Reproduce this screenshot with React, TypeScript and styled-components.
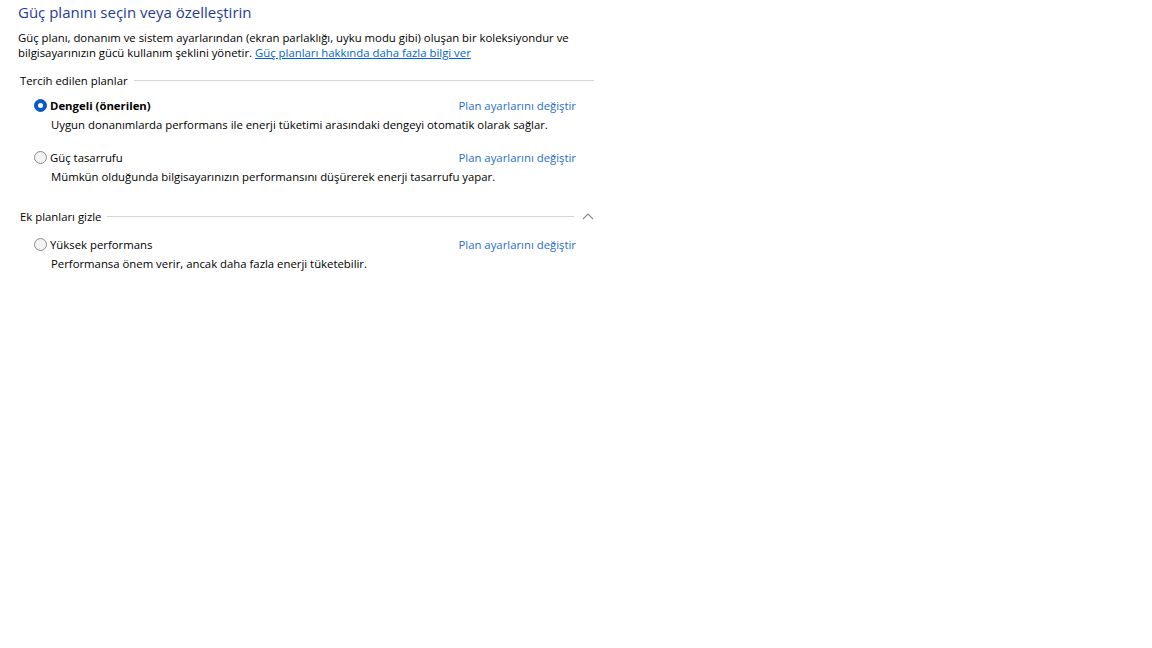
import React from "react";
import styled, { createGlobalStyle } from "styled-components";

const GlobalStyle = createGlobalStyle`
  html, body {
    margin: 0;
    padding: 0;
    background: #ffffff;
  }
  body {
    font-family: "Open Sans", "Noto Sans", sans-serif;
    font-size: 11.35px;
    color: #000000;
  }
`;

const Page = styled.div`
  width: 1152px;
  height: 648px;
  box-sizing: border-box;
  padding: 2px 0 0 18px;
  background: #ffffff;
`;

const Content = styled.div`
  width: 576px;
  display: flex;
  flex-direction: column;
`;

const Title = styled.h1`
  margin: 0;
  font-weight: 400;
  font-size: 15px;
  line-height: 21px;
  color: #1e3c96;
`;

const Intro = styled.div`
  margin-top: 7px;
  display: flex;
  flex-direction: column;
`;

const IntroLine = styled.div`
  height: 15px;
  line-height: 15px;
  white-space: nowrap;
`;

const Link = styled.a`
  color: #0066cc;
  text-decoration: underline;
  cursor: pointer;
`;

const GroupHeader = styled.div<{ $top: number }>`
  display: flex;
  align-items: center;
  gap: 6px;
  margin: ${(p) => p.$top}px 0 0 2px;
  height: 16px;
`;

const GroupLabel = styled.span`
  white-space: nowrap;
`;

const Rule = styled.div`
  flex: 1;
  height: 1px;
  background: #d4d4d4;
`;

const Chevron = styled.span`
  display: flex;
  width: 14px;
  justify-content: flex-end;
`;

const PlanList = styled.div<{ $top: number }>`
  display: flex;
  flex-direction: column;
  gap: 18px;
  margin: ${(p) => p.$top}px 0 0 16px;
  width: 542px;
`;

const Plan = styled.div`
  display: flex;
  flex-direction: column;
  gap: 4px;
`;

const PlanRow = styled.div`
  display: flex;
  align-items: center;
  justify-content: space-between;
  height: 15px;
`;

const PlanName = styled.label<{ $bold?: boolean }>`
  display: flex;
  align-items: center;
  gap: 3px;
  font-weight: ${(p) => (p.$bold ? 700 : 400)};
`;

const Radio = styled.span<{ $checked?: boolean }>`
  width: 13px;
  height: 13px;
  box-sizing: border-box;
  border-radius: 50%;
  border: 1px solid ${(p) => (p.$checked ? "#0a5cc4" : "#8c8c8c")};
  background: ${(p) => (p.$checked ? "#0a5cc4" : "#f3f3f3")};
  display: flex;
  align-items: center;
  justify-content: center;
  &::after {
    content: "";
    display: ${(p) => (p.$checked ? "block" : "none")};
    width: 5px;
    height: 5px;
    border-radius: 50%;
    background: #ffffff;
  }
`;

const PlanLink = styled.a`
  color: #1f6fd0;
  cursor: pointer;
`;

const PlanDesc = styled.div`
  padding-left: 17px;
  line-height: 15px;
  white-space: nowrap;
`;

type PlanItem = { name: string; desc: string; checked?: boolean };

const preferred: PlanItem[] = [
  {
    name: "Dengeli (önerilen)",
    desc: "Uygun donanımlarda performans ile enerji tüketimi arasındaki dengeyi otomatik olarak sağlar.",
    checked: true,
  },
  {
    name: "Güç tasarrufu",
    desc: "Mümkün olduğunda bilgisayarınızın performansını düşürerek enerji tasarrufu yapar.",
  },
];

const extra: PlanItem[] = [
  {
    name: "Yüksek performans",
    desc: "Performansa önem verir, ancak daha fazla enerji tüketebilir.",
  },
];

const PlanBlock = ({ name, desc, checked }: PlanItem) => (
  <Plan>
    <PlanRow>
      <PlanName $bold={checked}>
        <Radio $checked={checked} />
        {name}
      </PlanName>
      <PlanLink>Plan ayarlarını değiştir</PlanLink>
    </PlanRow>
    <PlanDesc>{desc}</PlanDesc>
  </Plan>
);

export default function App() {
  return (
    <>
      <GlobalStyle />
      <Page>
        <Content>
          <Title>Güç planını seçin veya özelleştirin</Title>
          <Intro>
            <IntroLine>
              Güç planı, donanım ve sistem ayarlarından (ekran parlaklığı, uyku modu gibi) oluşan bir koleksiyondur ve
            </IntroLine>
            <IntroLine>
              bilgisayarınızın gücü kullanım şeklini yönetir.{" "}
              <Link>Güç planları hakkında daha fazla bilgi ver</Link>
            </IntroLine>
          </Intro>
          <GroupHeader $top={12}>
            <GroupLabel>Tercih edilen planlar</GroupLabel>
            <Rule />
          </GroupHeader>
          <PlanList $top={10}>
            {preferred.map((p) => (
              <PlanBlock key={p.name} {...p} />
            ))}
          </PlanList>
          <GroupHeader $top={24}>
            <GroupLabel>Ek planları gizle</GroupLabel>
            <Rule />
            <Chevron>
              <svg width="12" height="7" viewBox="0 0 12 7">
                <path d="M1 6 L6 1 L11 6" fill="none" stroke="#8a8a8a" strokeWidth="1.1" />
              </svg>
            </Chevron>
          </GroupHeader>
          <PlanList $top={13}>
            {extra.map((p) => (
              <PlanBlock key={p.name} {...p} />
            ))}
          </PlanList>
        </Content>
      </Page>
    </>
  );
}
